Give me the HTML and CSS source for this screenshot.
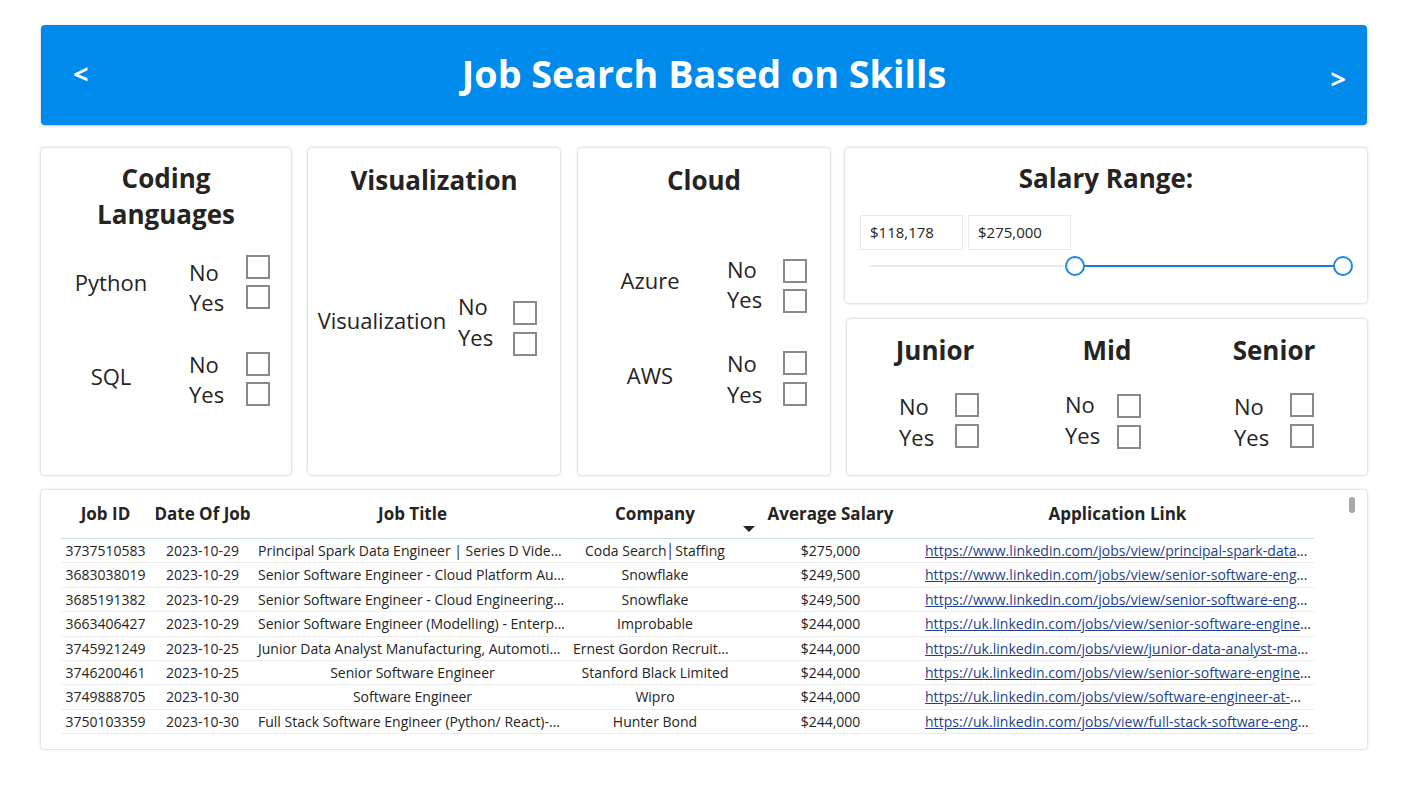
FILE: index.html
```html
<!DOCTYPE html>
<html lang="en">
<head>
<meta charset="utf-8">
<title>Job Search Based on Skills</title>
<link rel="stylesheet" href="styles.css">
</head>
<body>
<div class="page">
  <header class="banner">
    <span class="nav prev">&lt;</span>
    <h1 class="banner-title">Job Search Based on Skills</h1>
    <span class="nav next">&gt;</span>
  </header>

  <section class="filters">
    <div class="card card-coding">
      <h2 class="card-title">Coding<br>Languages</h2>
      <div class="group g-python">
        <div class="glabel">Python</div>
        <div class="opts">
          <div class="opt"><span class="opt-t">No</span><span class="cb"></span></div>
          <div class="opt"><span class="opt-t">Yes</span><span class="cb"></span></div>
        </div>
      </div>
      <div class="group g-sql">
        <div class="glabel">SQL</div>
        <div class="opts">
          <div class="opt"><span class="opt-t">No</span><span class="cb"></span></div>
          <div class="opt"><span class="opt-t">Yes</span><span class="cb"></span></div>
        </div>
      </div>
    </div>

    <div class="card card-viz">
      <h2 class="card-title single">Visualization</h2>
      <div class="group g-viz">
        <div class="glabel">Visualization</div>
        <div class="opts">
          <div class="opt"><span class="opt-t">No</span><span class="cb"></span></div>
          <div class="opt"><span class="opt-t">Yes</span><span class="cb"></span></div>
        </div>
      </div>
    </div>

    <div class="card card-cloud">
      <h2 class="card-title single">Cloud</h2>
      <div class="group g-azure">
        <div class="glabel">Azure</div>
        <div class="opts">
          <div class="opt"><span class="opt-t">No</span><span class="cb"></span></div>
          <div class="opt"><span class="opt-t">Yes</span><span class="cb"></span></div>
        </div>
      </div>
      <div class="group g-aws">
        <div class="glabel">AWS</div>
        <div class="opts">
          <div class="opt"><span class="opt-t">No</span><span class="cb"></span></div>
          <div class="opt"><span class="opt-t">Yes</span><span class="cb"></span></div>
        </div>
      </div>
    </div>

    <div class="right-col">
      <div class="card card-salary">
        <h2 class="card-title single">Salary Range:</h2>
        <div class="range-inputs">
          <div class="range-box">$118,178</div>
          <div class="range-box">$275,000</div>
        </div>
        <div class="slider">
          <div class="track"></div>
          <div class="track-fill"></div>
          <span class="handle h-left"></span>
          <span class="handle h-right"></span>
        </div>
      </div>

      <div class="card card-levels">
        <div class="level l-junior">
          <h2 class="card-title single">Junior</h2>
          <div class="opts">
            <div class="opt"><span class="opt-t">No</span><span class="cb"></span></div>
            <div class="opt"><span class="opt-t">Yes</span><span class="cb"></span></div>
          </div>
        </div>
        <div class="level l-mid">
          <h2 class="card-title single">Mid</h2>
          <div class="opts">
            <div class="opt"><span class="opt-t">No</span><span class="cb"></span></div>
            <div class="opt"><span class="opt-t">Yes</span><span class="cb"></span></div>
          </div>
        </div>
        <div class="level l-senior">
          <h2 class="card-title single">Senior</h2>
          <div class="opts">
            <div class="opt"><span class="opt-t">No</span><span class="cb"></span></div>
            <div class="opt"><span class="opt-t">Yes</span><span class="cb"></span></div>
          </div>
        </div>
      </div>
    </div>
  </section>

  <section class="card table-card">
    <span class="scroll-thumb"></span>
    <div class="tbl">
      <div class="tr th">
        <div class="c c1">Job ID</div>
        <div class="c c2">Date Of Job</div>
        <div class="c c3">Job Title</div>
        <div class="c c4">Company</div>
        <div class="c c5">Average Salary<span class="sort-arrow"></span></div>
        <div class="c c6">Application Link</div>
      </div>
      <div class="tr">
        <div class="c c1">3737510583</div>
        <div class="c c2">2023-10-29</div>
        <div class="c c3">Principal Spark Data Engineer | Series D Video Platform</div>
        <div class="c c4">Coda Search│Staffing</div>
        <div class="c c5">$275,000</div>
        <div class="c c6"><a href="#">https://www.linkedin.com/jobs/view/principal-spark-data-engineer-series-d</a></div>
      </div>
      <div class="tr">
        <div class="c c1">3683038019</div>
        <div class="c c2">2023-10-29</div>
        <div class="c c3">Senior Software Engineer - Cloud Platform Automation</div>
        <div class="c c4">Snowflake</div>
        <div class="c c5">$249,500</div>
        <div class="c c6"><a href="#">https://www.linkedin.com/jobs/view/senior-software-engineer-cloud</a></div>
      </div>
      <div class="tr">
        <div class="c c1">3685191382</div>
        <div class="c c2">2023-10-29</div>
        <div class="c c3">Senior Software Engineer - Cloud Engineering Platform</div>
        <div class="c c4">Snowflake</div>
        <div class="c c5">$249,500</div>
        <div class="c c6"><a href="#">https://www.linkedin.com/jobs/view/senior-software-engineer-cloud</a></div>
      </div>
      <div class="tr">
        <div class="c c1">3663406427</div>
        <div class="c c2">2023-10-29</div>
        <div class="c c3">Senior Software Engineer (Modelling) - Enterprise</div>
        <div class="c c4">Improbable</div>
        <div class="c c5">$244,000</div>
        <div class="c c6"><a href="#">https://uk.linkedin.com/jobs/view/senior-software-engineer-modelling</a></div>
      </div>
      <div class="tr">
        <div class="c c1">3745921249</div>
        <div class="c c2">2023-10-25</div>
        <div class="c c3">Junior Data Analyst Manufacturing, Automotive Industry</div>
        <div class="c c4">Ernest Gordon Recruitment</div>
        <div class="c c5">$244,000</div>
        <div class="c c6"><a href="#">https://uk.linkedin.com/jobs/view/junior-data-analyst-manufacturing</a></div>
      </div>
      <div class="tr">
        <div class="c c1">3746200461</div>
        <div class="c c2">2023-10-25</div>
        <div class="c c3">Senior Software Engineer</div>
        <div class="c c4">Stanford Black Limited</div>
        <div class="c c5">$244,000</div>
        <div class="c c6"><a href="#">https://uk.linkedin.com/jobs/view/senior-software-engineer-at-stanford</a></div>
      </div>
      <div class="tr">
        <div class="c c1">3749888705</div>
        <div class="c c2">2023-10-30</div>
        <div class="c c3">Software Engineer</div>
        <div class="c c4">Wipro</div>
        <div class="c c5">$244,000</div>
        <div class="c c6"><a href="#">https://uk.linkedin.com/jobs/view/software-engineer-at-wipro-3749888705</a></div>
      </div>
      <div class="tr">
        <div class="c c1">3750103359</div>
        <div class="c c2">2023-10-30</div>
        <div class="c c3">Full Stack Software Engineer (Python/ React)-Fintech</div>
        <div class="c c4">Hunter Bond</div>
        <div class="c c5">$244,000</div>
        <div class="c c6"><a href="#">https://uk.linkedin.com/jobs/view/full-stack-software-engineer-python</a></div>
      </div>
    </div>
  </section>
</div>
</body>
</html>
```

FILE: styles.css
```css
* { box-sizing: border-box; }
html, body { margin: 0; padding: 0; background: #ffffff; }
body {
  font-family: "Open Sans", "Noto Sans", sans-serif;
  color: #252423;
}
.page {
  width: 1411px;
  height: 788px;
  padding: 25px 44px 0 41px;
}

/* banner */
.banner {
  height: 100px;
  background: #008aec;
  border-radius: 4px;
  box-shadow: 0 1px 3px rgba(0,0,0,0.25);
  display: grid;
  grid-template-columns: 1fr auto 1fr;
  align-items: center;
  color: #ffffff;
}
.banner-title {
  margin: 0;
  font-size: 37.7px;
  font-weight: 700;
  line-height: 48px;
  padding-bottom: 3px;
}
.nav {
  font-size: 27px;
  font-weight: 700;
  line-height: 30px;
}
.prev { justify-self: start; padding-left: 32px; padding-bottom: 2px; }
.next { justify-self: end; padding-right: 21px; padding-top: 8px; }

/* cards */
.card {
  background: #ffffff;
  border-radius: 4px;
  box-shadow: 0 0 3px rgba(0,0,0,0.3);
}
.filters {
  margin-top: 23px;
  height: 327px;
  display: flex;
}
.card-coding { width: 250px; margin-right: 17px; padding-top: 12px; }
.card-viz { width: 252px; margin-right: 18px; padding-top: 14px; }
.card-cloud { width: 252px; margin-right: 15px; padding-top: 14px; }
.right-col {
  width: 522px;
  display: flex;
  flex-direction: column;
  gap: 16px;
}
.card-title {
  margin: 0;
  text-align: center;
  font-size: 26px;
  font-weight: 700;
  line-height: 36px;
}

.group { display: flex; align-items: center; }
.glabel { text-align: center; font-size: 22px; line-height: 30px; }
.opts { display: flex; flex-direction: column; }
.opt { display: flex; align-items: center; height: 30px; }
.opt-t { font-size: 22px; line-height: 26px; }
.cb {
  width: 24px;
  height: 24px;
  border: 2px solid #898989;
  background: #ffffff;
  flex: none;
}

/* coding */
.g-python { margin-top: 20px; }
.g-sql { margin-top: 37px; }
.card-coding .glabel { width: 140px; }
.card-coding .opts { margin-left: 8px; }
.card-coding .opt-t { width: 57px; }
.g-python .opt-t { padding-top: 10px; }
.g-sql .glabel { margin-bottom: 6px; }

/* visualization */
.g-viz { margin-top: 99px; }
.g-viz .glabel { width: 148px; margin-bottom: 16px; }
.g-viz .opts { margin-left: 2px; }
.g-viz .opt { height: 31px; }
.g-viz .opt-t { width: 55px; padding-bottom: 13px; }

/* cloud */
.g-azure { margin-top: 58px; }
.g-aws { margin-top: 31px; }
.card-cloud .glabel { width: 144px; }
.g-azure .glabel { margin-bottom: 12px; }
.g-aws .glabel { margin-bottom: 6px; }
.card-cloud .opts { margin-left: 5px; }
.card-cloud .opt-t { width: 56px; }
.g-azure .opt-t { padding-bottom: 4px; }
.g-aws .opt { height: 31px; }

/* salary */
.card-salary { height: 155px; padding-top: 12px; }
.range-inputs {
  margin-top: 19px;
  padding-left: 15px;
  display: flex;
  gap: 5px;
}
.range-box {
  width: 103px;
  height: 35px;
  border: 1px solid #e9e9e9;
  font-size: 15px;
  line-height: 33px;
  padding-left: 9px;
}
.slider {
  position: relative;
  margin-top: 6px;
  margin-left: 24px;
  width: 474px;
  height: 20px;
}
.track {
  position: absolute;
  left: 0; right: 0; top: 9px;
  height: 2px;
  background: #ebebeb;
}
.track-fill {
  position: absolute;
  left: 206px; right: 0; top: 9px;
  height: 2px;
  background: #1a7bd9;
}
.handle {
  position: absolute;
  top: 0;
  width: 20px;
  height: 20px;
  border-radius: 50%;
  border: 2px solid #1f86e6;
  background: #ffffff;
}
.h-left { left: 196px; }
.h-right { left: 464px; }

/* levels */
.card-levels {
  height: 156px;
  margin-left: 2px;
  padding-top: 13px;
  display: flex;
}
.level { display: flex; flex-direction: column; }
.level .opts { margin-top: 21px; }
.level .opt { height: 31px; }
.l-junior { width: 176px; }
.l-junior .opts { padding-left: 52px; }
.l-junior .opt-t { width: 56px; padding-top: 2px; }
.l-mid { width: 168px; }
.l-mid .opts { padding-left: 42px; margin-top: 22px; }
.l-mid .opt-t { width: 52px; padding-bottom: 3px; }
.l-senior { width: 166px; }
.l-senior .opts { padding-left: 43px; }
.l-senior .opt-t { width: 56px; padding-top: 2px; }

/* table */
.table-card {
  position: relative;
  margin-top: 15px;
  height: 259px;
  padding: 10px 0 0 20px;
}
.scroll-thumb {
  position: absolute;
  left: 1308px;
  top: 7px;
  width: 6px;
  height: 16px;
  border-radius: 3px;
  background: #a8a8a8;
}
.tbl { width: 1253px; }
.tr {
  display: flex;
  height: 24.4px;
  border-bottom: 1px solid #ededed;
  font-size: 14px;
  line-height: 23px;
}
.tr.th {
  height: 39px;
  border-bottom: 1px solid #c6dcf1;
  font-size: 17px;
  font-weight: 700;
  line-height: 28px;
}
.c {
  text-align: center;
  white-space: nowrap;
  overflow: hidden;
  text-overflow: ellipsis;
  padding: 0 3px;
}
.c1 { width: 89px; }
.c2 { width: 105px; }
.c3 { width: 315px; }
.c4 { width: 170px; }
.c5 { width: 181px; }
.c6 { width: 393px; }
.tr:not(.th) .c6 { text-align: left; padding-left: 4px; padding-right: 3px; }
.th .c5 { position: relative; overflow: visible; }
.sort-arrow {
  position: absolute;
  left: 3px;
  top: 26px;
  width: 0;
  height: 0;
  border-left: 6px solid transparent;
  border-right: 6px solid transparent;
  border-top: 6px solid #252423;
}
.c6 a { color: #233f8e; text-decoration: underline; letter-spacing: 0.03px; }
```
